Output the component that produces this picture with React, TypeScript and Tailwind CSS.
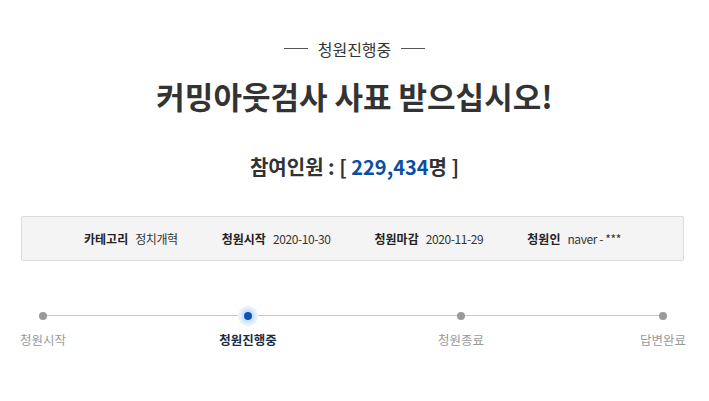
const steps = [
  { label: '청원시작', active: false, ml: '' },
  { label: '청원진행중', active: true, ml: 'ml-[145px]' },
  { label: '청원종료', active: false, ml: 'ml-[153px]' },
  { label: '답변완료', active: false, ml: 'ml-[142px]' },
];

const info = [
  { k: '카테고리', v: '정치개혁' },
  { k: '청원시작', v: '2020-10-30' },
  { k: '청원마감', v: '2020-11-29' },
  { k: '청원인', v: 'naver - ***' },
];

export default function App() {
  return (
    <div
      className="w-[709px] h-[401px] bg-white text-[#333] overflow-hidden"
      style={{ fontFamily: '"Noto Sans CJK KR", "Noto Sans", sans-serif' }}
    >
      <div className="flex items-center justify-center gap-[10px] pt-[37px] h-[60px]">
        <span className="w-[24px] h-px bg-[#555]" />
        <span className="text-[16px] leading-[22px] text-[#333]">청원진행중</span>
        <span className="w-[24px] h-px bg-[#555]" />
      </div>

      <h1 className="mt-[17px] text-center text-[31px] leading-[37px] font-bold text-[#333]">
        커밍아웃검사 사표 받으십시오!
      </h1>

      <div className="mt-[39px] text-center text-[20px] leading-[28px] font-bold text-[#333]">
        참여인원 : [ <span className="text-[#0b4ea2]">229,434</span>명 ]
      </div>

      <div className="ml-[21px] mr-[25px] mt-[35px] h-[45px] bg-[#f4f4f4] border border-[#dcdcdc] rounded-[2px] flex items-center justify-center gap-[44px] text-[12px]">
        {info.map((it) => (
          <div key={it.k} className="flex items-center gap-[7px]">
            <span className="font-bold text-[#222]">{it.k}</span>
            <span className="text-[#333] tracking-[-0.4px]">{it.v}</span>
          </div>
        ))}
      </div>

      <div className="relative mt-[44px] px-[13px]">
        <div className="absolute left-[43px] right-[46px] top-[10px] h-px bg-[#c8c8c8]" />
        <div className="relative flex">
          {steps.map((s) => (
            <div key={s.label} className={`${s.ml} w-[60px] flex flex-col items-center`}>
              <div className="h-[21px] flex items-center justify-center">
                {s.active ? (
                  <div className="w-[20px] h-[20px] rounded-full bg-[#e6f1fd] flex items-center justify-center">
                    <div className="w-[14px] h-[14px] rounded-full bg-[#cfe3fa] flex items-center justify-center">
                      <div className="w-[8px] h-[8px] rounded-full bg-[#0b55b8]" />
                    </div>
                  </div>
                ) : (
                  <div className="w-[8px] h-[8px] rounded-full bg-[#9a9a9a]" />
                )}
              </div>
              <span
                className={`mt-[5px] whitespace-nowrap text-[12.5px] leading-[18px] ${
                  s.active ? 'font-bold text-[#1c2b45]' : 'text-[#999]'
                }`}
              >
                {s.label}
              </span>
            </div>
          ))}
        </div>
      </div>
    </div>
  );
}
